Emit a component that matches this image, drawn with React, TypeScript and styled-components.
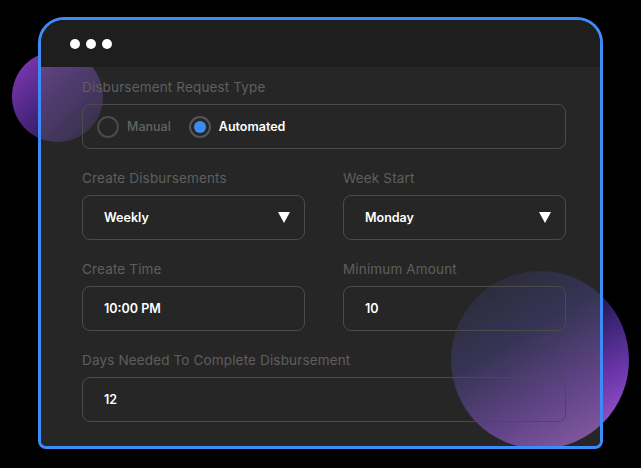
import styled, { createGlobalStyle } from 'styled-components'

const GlobalStyle = createGlobalStyle`
  html, body {
    margin: 0;
    padding: 0;
    background: #000;
  }
  body {
    font-family: Inter, "Noto Sans", sans-serif;
  }
  * { box-sizing: border-box; }
`

const Stage = styled.div`
  position: relative;
  width: 641px;
  height: 468px;
  padding: 17px 0 0 38px;
  background: #000;
  overflow: hidden;
`

// decorative gradient blobs sitting behind the window
const Blob = styled.div<{ $left: number; $top: number; $size: number; $bg: string }>`
  position: absolute;
  z-index: 0;
  left: ${({ $left }) => $left}px;
  top: ${({ $top }) => $top}px;
  width: ${({ $size }) => $size}px;
  height: ${({ $size }) => $size}px;
  border-radius: 50%;
  background: ${({ $bg }) => $bg};
`

const Window = styled.div`
  position: relative;
  z-index: 1;
  width: 565px;
  height: 432px;
  border: 3px solid #3d8bf6;
  border-radius: 26px 26px 8px 8px;
  overflow: hidden;
  display: flex;
  flex-direction: column;
`

const TitleBar = styled.div`
  height: 47px;
  flex: none;
  background: #1e1e1e;
  display: flex;
  align-items: center;
  gap: 6px;
  padding-left: 29px;
`

const Dot = styled.span`
  width: 10px;
  height: 10px;
  border-radius: 50%;
  background: #fff;
`

const Body = styled.div`
  flex: 1;
  background: rgba(95, 95, 95, 0.4);
  padding: 12px 34px 0 41px;
  display: flex;
  flex-direction: column;
  gap: 21px;
`

const Row = styled.div`
  display: grid;
  grid-template-columns: 223px 223px;
  column-gap: 38px;
`

const Field = styled.div`
  display: flex;
  flex-direction: column;
  gap: 9px;
`

const Label = styled.div`
  font-size: 13.5px;
  line-height: 16px;
  color: #5f5f5f;
  letter-spacing: 0.15px;
`

const Box = styled.div`
  height: 45px;
  border: 1.5px solid #4b4b4b;
  border-radius: 8px;
  display: flex;
  align-items: center;
  padding: 0 14px 0 21px;
  font-size: 12.5px;
  font-weight: 600;
  color: #fff;
  justify-content: space-between;
`

const RadioBox = styled(Box)`
  justify-content: flex-start;
  padding-left: 14px;
`

const RadioOption = styled.label<{ $active?: boolean }>`
  display: flex;
  align-items: center;
  gap: 8px;
  margin-right: 18px;
  font-size: 12.5px;
  font-weight: ${({ $active }) => ($active ? 600 : 500)};
  color: ${({ $active }) => ($active ? '#fff' : '#646464')};
`

const RadioCircle = styled.span<{ $active?: boolean }>`
  width: 22px;
  height: 22px;
  border-radius: 50%;
  border: 2px solid ${({ $active }) => ($active ? '#555' : '#4a4a4a')};
  display: flex;
  align-items: center;
  justify-content: center;

  &::after {
    content: '';
    display: ${({ $active }) => ($active ? 'block' : 'none')};
    width: 12px;
    height: 12px;
    border-radius: 50%;
    background: #3d8bf6;
  }
`

const Caret = styled.span`
  width: 0;
  height: 0;
  border-left: 6px solid transparent;
  border-right: 6px solid transparent;
  border-top: 11px solid #fff;
`

const Select = ({ value }: { value: string }) => (
  <Box>
    <span>{value}</span>
    <Caret />
  </Box>
)

export default function App() {
  return (
    <>
      <GlobalStyle />
      <Stage>
        <Blob $left={12} $top={51} $size={91} $bg="linear-gradient(135deg, #8a3cbc 0%, #4a2680 45%, #120f30 100%)" />
        <Blob $left={451} $top={271} $size={178} $bg="linear-gradient(150deg, #050510 0%, #1c1850 38%, #6a36aa 70%, #b664dc 100%)" />
        <Window>
          <TitleBar>
            <Dot />
            <Dot />
            <Dot />
          </TitleBar>
          <Body>
            <Field>
              <Label>Disbursement Request Type</Label>
              <RadioBox>
                <RadioOption>
                  <RadioCircle />
                  Manual
                </RadioOption>
                <RadioOption $active>
                  <RadioCircle $active />
                  Automated
                </RadioOption>
              </RadioBox>
            </Field>
            <Row>
              <Field>
                <Label>Create Disbursements</Label>
                <Select value="Weekly" />
              </Field>
              <Field>
                <Label>Week Start</Label>
                <Select value="Monday" />
              </Field>
            </Row>
            <Row>
              <Field>
                <Label>Create Time</Label>
                <Box>10:00 PM</Box>
              </Field>
              <Field>
                <Label>Minimum Amount</Label>
                <Box>10</Box>
              </Field>
            </Row>
            <Field>
              <Label>Days Needed To Complete Disbursement</Label>
              <Box>12</Box>
            </Field>
          </Body>
        </Window>
      </Stage>
    </>
  )
}
